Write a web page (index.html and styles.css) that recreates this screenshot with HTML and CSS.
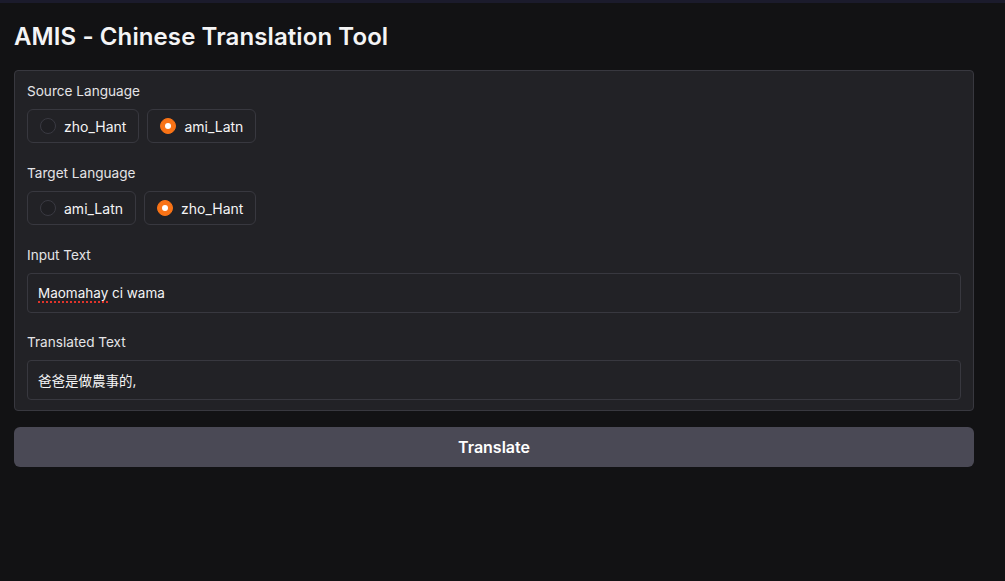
FILE: index.html
```html
<!DOCTYPE html>
<html lang="en">
<head>
<meta charset="utf-8">
<title>AMIS - Chinese Translation Tool</title>
<link rel="stylesheet" href="styles.css">
</head>
<body>
<div class="topbar"></div>
<main class="app">
  <h1 class="title">AMIS - Chinese Translation Tool</h1>
  <section class="panel">
    <div class="field">
      <div class="label">Source Language</div>
      <div class="radios">
        <label class="pill"><span class="dot"></span><span>zho_Hant</span></label>
        <label class="pill"><span class="dot on"></span><span>ami_Latn</span></label>
      </div>
    </div>
    <div class="field">
      <div class="label">Target Language</div>
      <div class="radios">
        <label class="pill"><span class="dot"></span><span>ami_Latn</span></label>
        <label class="pill"><span class="dot on"></span><span>zho_Hant</span></label>
      </div>
    </div>
    <div class="field">
      <div class="label">Input Text</div>
      <div class="box"><span class="misspelled">Maomahay</span> ci wama</div>
    </div>
    <div class="field tight">
      <div class="label">Translated Text</div>
      <div class="box">爸爸是做農事的,</div>
    </div>
  </section>
  <button class="btn">Translate</button>
</main>
</body>
</html>
```
FILE: styles.css
```css
* { box-sizing: border-box; }
html, body {
  margin: 0;
  padding: 0;
  background: #121214;
  color: #f4f4f5;
  font-family: Inter, "Noto Sans", "Noto Sans CJK TC", sans-serif;
}
.topbar {
  height: 3px;
  background: #1b1b2c;
}
.app {
  width: 960px;
  margin-left: 14px;
  display: flex;
  flex-direction: column;
}
.title {
  margin: 19px 0 0 0;
  font-size: 24px;
  line-height: 30px;
  font-weight: 600;
  color: #f4f4f5;
  letter-spacing: 0.1px;
}
.panel {
  margin-top: 18px;
  background: #222226;
  border: 1px solid #38383f;
  border-radius: 4px;
  padding: 11px 12px 10px 12px;
  display: flex;
  flex-direction: column;
  gap: 21px;
}
.field {
  display: flex;
  flex-direction: column;
  gap: 9px;
}
.field.tight {
  margin-top: -1px;
}
.label {
  font-size: 13.6px;
  line-height: 18px;
  height: 18px;
  color: #e4e4e7;
}
.radios {
  display: flex;
  gap: 8px;
}
.pill {
  display: flex;
  align-items: center;
  gap: 8px;
  height: 34px;
  padding: 0 12px;
  border: 1px solid #38383f;
  border-radius: 6px;
  font-size: 14px;
  color: #f4f4f5;
}
.dot {
  width: 16px;
  height: 16px;
  border-radius: 50%;
  border: 1px solid #3a3a42;
  background: #1f1f23;
  position: relative;
}
.dot.on {
  background: #f97316;
  border-color: #f97316;
}
.dot.on::after {
  content: "";
  position: absolute;
  left: 4px;
  top: 4px;
  width: 6px;
  height: 6px;
  border-radius: 50%;
  background: #ffffff;
}
.box {
  height: 40px;
  border: 1px solid #38383f;
  border-radius: 4px;
  background: #222226;
  padding: 0 10px;
  display: flex;
  align-items: center;
  font-size: 13.5px;
  color: #f4f4f5;
  white-space: pre;
}
.misspelled {
  text-decoration: underline dotted #e0342b;
  text-decoration-thickness: 2px;
  text-underline-offset: 3px;
}
.btn {
  margin-top: 16px;
  height: 40px;
  border: none;
  border-radius: 6px;
  background: #4a4955;
  color: #ffffff;
  font-family: Inter, "Noto Sans", sans-serif;
  font-size: 16px;
  font-weight: 600;
  cursor: pointer;
}
```
